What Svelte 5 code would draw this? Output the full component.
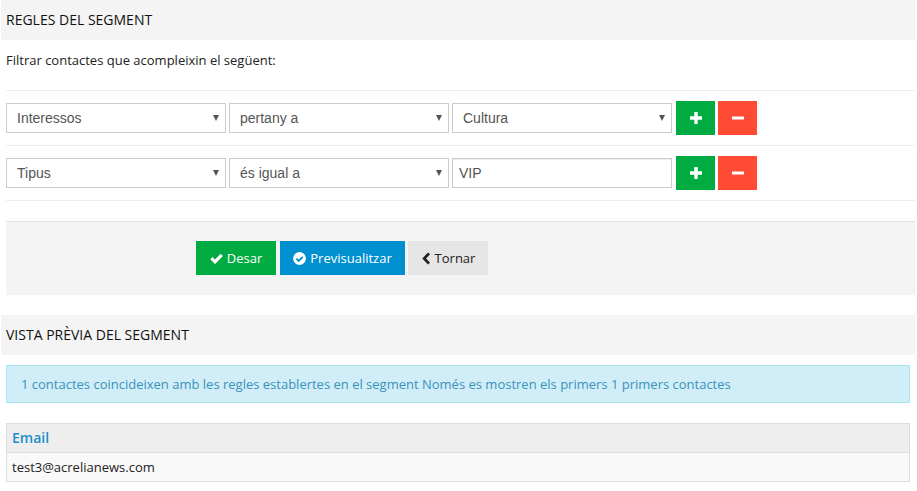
<script>
  const rows = [
    { field: 'Interessos', op: 'pertany a', value: 'Cultura', select: true },
    { field: 'Tipus', op: 'és igual a', value: 'VIP', select: false }
  ];
</script>

<div class="page">
  <h3 class="heading">REGLES DEL SEGMENT</h3>
  <p class="intro">Filtrar contactes que acompleixin el següent:</p>

  <div class="rules">
    {#each rows as row}
      <div class="rule">
        <span class="sel"><select class="ctl"><option>{row.field}</option></select></span>
        <span class="sel"><select class="ctl"><option>{row.op}</option></select></span>
        {#if row.select}
          <span class="sel"><select class="ctl"><option>{row.value}</option></select></span>
        {:else}
          <input class="ctl text" value={row.value} />
        {/if}
        <div class="btns">
          <button class="sq green" aria-label="Afegir">
            <svg width="12" height="12" viewBox="0 0 12 12"><path d="M6 0v12M0 6h12" stroke="#fff" stroke-width="3.4" fill="none" /></svg>
          </button>
          <button class="sq red" aria-label="Eliminar">
            <svg width="12" height="12" viewBox="0 0 12 12"><path d="M0 6h12" stroke="#fff" stroke-width="3" fill="none" /></svg>
          </button>
        </div>
      </div>
    {/each}
  </div>

  <div class="actions">
    <button class="act green w80">
      <svg width="13" height="11" viewBox="0 0 13 11"><path d="M1.4 5.2 5 8.8l6.8-7" stroke="#fff" stroke-width="3.2" fill="none" /></svg>
      Desar
    </button>
    <button class="act blue w125">
      <svg width="13" height="13" viewBox="0 0 13 13"><circle cx="6.5" cy="6.5" r="6.4" fill="#fff" /><path d="M3.4 6.6l2.3 2.3 4-4" stroke="#0090cf" stroke-width="1.9" fill="none" /></svg>
      Previsualitzar
    </button>
    <button class="act grey w80 back">
      <svg width="9" height="13" viewBox="0 0 9 13"><path d="M7 1.4 2.2 6.5 7 11.6" stroke="#222" stroke-width="2.8" fill="none" /></svg>
      Tornar
    </button>
  </div>

  <h3 class="heading second">VISTA PRÈVIA DEL SEGMENT</h3>
  <div class="alert">1 contactes coincideixen amb les regles establertes en el segment Només es mostren els primers 1 primers contactes</div>

  <table>
    <thead><tr><th>Email</th></tr></thead>
    <tbody><tr><td>test3@acrelianews.com</td></tr></tbody>
  </table>
</div>

<style>
  :global(body) {
    margin: 0;
    background: #fff;
    font-family: "Open Sans", sans-serif;
    font-size: 13px;
    color: #222;
  }
  .page {
    width: 917px;
    height: 491px;
    overflow: hidden;
    box-sizing: border-box;
    padding: 0 2px 0 1px;
  }
  .heading {
    margin: 0;
    height: 40px;
    line-height: 40px;
    padding-left: 5px;
    background: #f4f4f4;
    font-size: 14px;
    font-weight: 400;
    color: #111;
  }
  .second { margin-top: 20px; }
  .intro {
    margin: 0 0 0 5px;
    height: 51px;
    padding-top: 11px;
    box-sizing: border-box;
    line-height: 18px;
    border-bottom: 1px solid #eee;
    color: #222;
  }
  .rules { margin-left: 5px; }
  .rule {
    display: flex;
    align-items: center;
    gap: 3px;
    height: 55px;
    box-sizing: border-box;
    border-bottom: 1px solid #eee;
  }
  .sel {
    position: relative;
    display: block;
    width: 220px;
    height: 30px;
  }
  .sel::after {
    content: "";
    position: absolute;
    right: 7px;
    top: 12px;
    border-left: 3px solid transparent;
    border-right: 3px solid transparent;
    border-top: 6px solid #555;
    pointer-events: none;
  }
  .ctl {
    display: block;
    width: 220px;
    height: 30px;
    box-sizing: border-box;
    border: 1px solid #ccc;
    border-radius: 0;
    background-color: #fff;
    color: #555;
    font-family: "Liberation Sans", sans-serif;
    font-size: 14px;
    padding: 0 10px;
    margin: 0;
    outline: none;
    appearance: none;
  }
  .text {
    padding: 0 6px;
    box-shadow: inset 0 1px 1px rgba(0, 0, 0, 0.075);
  }
  .btns {
    display: flex;
    gap: 3px;
    margin-left: 1px;
  }
  button {
    border: 0;
    border-radius: 0;
    margin: 0;
    cursor: pointer;
    font-family: "Open Sans", sans-serif;
  }
  .sq {
    width: 39px;
    height: 34px;
    padding: 0;
    display: flex;
    align-items: center;
    justify-content: center;
  }
  .green { background: #00ac41; color: #fff; }
  .red { background: #ff4b33; color: #fff; }
  .blue { background: #0090cf; color: #fff; }
  .grey { background: #e6e6e6; color: #222; }
  .actions {
    display: flex;
    margin: 20px 0 0 5px;
    height: 74px;
    box-sizing: border-box;
    padding: 19px 0 0 190px;
    gap: 4px;
    background: #f4f4f4;
    border-top: 1px solid #e3e3e3;
  }
  .act {
    height: 34px;
    padding: 0;
    display: flex;
    align-items: center;
    justify-content: center;
    gap: 4px;
    font-size: 13px;
  }
  .w80 { width: 80px; }
  .w125 { width: 125px; }
  .w125 + .w80 { margin-left: -1px; }
  .back { padding-left: 1px; }
  .alert {
    margin: 10px 5px 0 5px;
    height: 38px;
    box-sizing: border-box;
    line-height: 36px;
    padding-left: 14px;
    background: #d1edf8;
    border: 1px solid #a9e6ef;
    color: #3a93b8;
    font-size: 13px;
  }
  table {
    margin: 20px 5px 0 5px;
    width: 904px;
    border-collapse: collapse;
    table-layout: fixed;
  }
  th, td {
    border: 1px solid #ddd;
    text-align: left;
    padding: 0 5px;
    height: 29px;
    box-sizing: border-box;
  }
  th {
    background: #eee;
    color: #1a8fc9;
    font-size: 14px;
    font-weight: 600;
    padding-bottom: 2px;
  }
  td {
    background: #f9f9f9;
    font-size: 13px;
    color: #222;
  }
</style>
